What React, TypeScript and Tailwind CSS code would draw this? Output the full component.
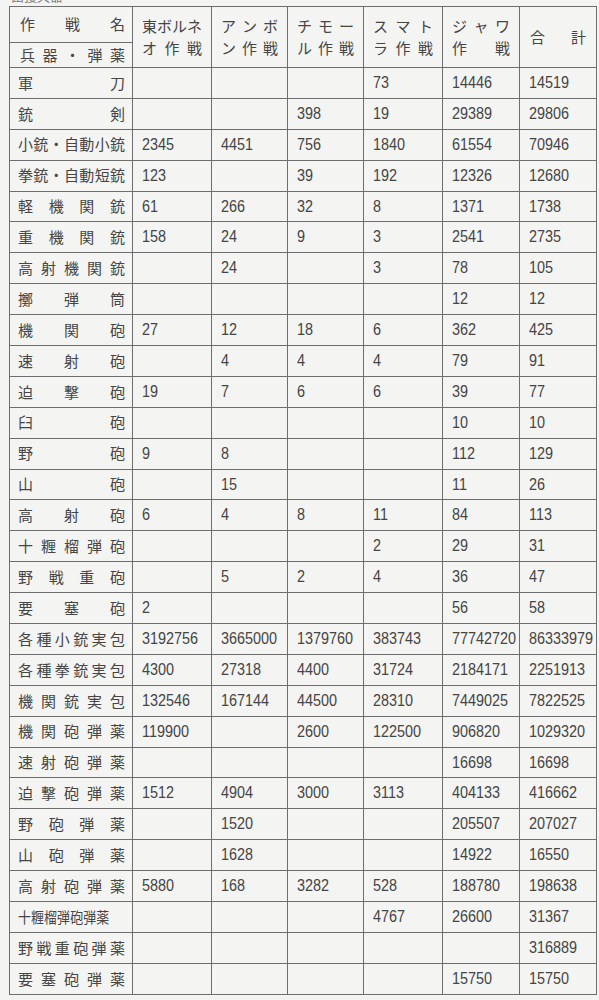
import React from 'react';

type Row = [string, string, string, string, string, string, string];

// 兵器・弾薬ごとの作戦別数量
const rows: Row[] = [
  ['軍刀', '', '', '', '73', '14446', '14519'],
  ['銃剣', '', '', '398', '19', '29389', '29806'],
  ['小銃・自動小銃', '2345', '4451', '756', '1840', '61554', '70946'],
  ['拳銃・自動短銃', '123', '', '39', '192', '12326', '12680'],
  ['軽機関銃', '61', '266', '32', '8', '1371', '1738'],
  ['重機関銃', '158', '24', '9', '3', '2541', '2735'],
  ['高射機関銃', '', '24', '', '3', '78', '105'],
  ['擲弾筒', '', '', '', '', '12', '12'],
  ['機関砲', '27', '12', '18', '6', '362', '425'],
  ['速射砲', '', '4', '4', '4', '79', '91'],
  ['迫撃砲', '19', '7', '6', '6', '39', '77'],
  ['臼砲', '', '', '', '', '10', '10'],
  ['野砲', '9', '8', '', '', '112', '129'],
  ['山砲', '', '15', '', '', '11', '26'],
  ['高射砲', '6', '4', '8', '11', '84', '113'],
  ['十糎榴弾砲', '', '', '', '2', '29', '31'],
  ['野戦重砲', '', '5', '2', '4', '36', '47'],
  ['要塞砲', '2', '', '', '', '56', '58'],
  ['各種小銃実包', '3192756', '3665000', '1379760', '383743', '77742720', '86333979'],
  ['各種拳銃実包', '4300', '27318', '4400', '31724', '2184171', '2251913'],
  ['機関銃実包', '132546', '167144', '44500', '28310', '7449025', '7822525'],
  ['機関砲弾薬', '119900', '', '2600', '122500', '906820', '1029320'],
  ['速射砲弾薬', '', '', '', '', '16698', '16698'],
  ['迫撃砲弾薬', '1512', '4904', '3000', '3113', '404133', '416662'],
  ['野砲弾薬', '', '1520', '', '', '205507', '207027'],
  ['山砲弾薬', '', '1628', '', '', '14922', '16550'],
  ['高射砲弾薬', '5880', '168', '3282', '528', '188780', '198638'],
  ['十糎榴弾砲弾薬', '', '', '', '4767', '26600', '31367'],
  ['野戦重砲弾薬', '', '', '', '', '', '316889'],
  ['要塞砲弾薬', '', '', '', '', '15750', '15750'],
];

const jp = "font-['Noto_Sans_CJK_JP','Noto_Sans',sans-serif]";
const num = "font-['Liberation_Sans',sans-serif]";
const cell = 'border-[1.5px] border-[#6e6e6e]';

function Spread({ text, className = '' }: { text: string; className?: string }) {
  return (
    <div className={`flex justify-between ${className}`}>
      {Array.from(text).map((ch, i) => (
        <span key={i}>{ch}</span>
      ))}
    </div>
  );
}

function HeadCell({ top, bottom }: { top: string; bottom: string }) {
  return (
    <th rowSpan={2} className={`${cell} px-[9px] align-middle font-normal`}>
      <Spread text={top} className="leading-[22px]" />
      <Spread text={bottom} className="leading-[22px]" />
    </th>
  );
}

export default function App() {
  return (
    <div className={`min-h-[1000px] w-[599px] overflow-hidden bg-[#f4f4f2] text-[#454545] ${jp}`}>
      <div className="h-[6px] overflow-hidden pl-[11px]">
        <div className="-mt-[12px] text-[13px] leading-[15px] text-[#7a7a7a]">鹵獲兵器</div>
      </div>
      <div className="pl-[9px]">
        <table className="w-[587px] table-fixed border-collapse text-[15px]">
          <colgroup>
            <col className="w-[123px]" />
            <col className="w-[79px]" />
            <col className="w-[76px]" />
            <col className="w-[76px]" />
            <col className="w-[79px]" />
            <col className="w-[77px]" />
            <col className="w-[77px]" />
          </colgroup>
          <thead>
            <tr className="h-[36px]">
              <th className={`${cell} pl-[10px] pr-[7px] font-normal`}>
                <Spread text="作戦名" />
              </th>
              <HeadCell top="東ボルネ" bottom="オ作戦" />
              <HeadCell top="アンボ" bottom="ン作戦" />
              <HeadCell top="チモー" bottom="ル作戦" />
              <HeadCell top="スマト" bottom="ラ作戦" />
              <HeadCell top="ジャワ" bottom="作戦" />
              <th rowSpan={2} className={`${cell} px-[10px] align-middle font-normal`}>
                <Spread text="合計" />
              </th>
            </tr>
            <tr className="h-[25px]">
              <th className={`${cell} pl-[10px] pr-[7px] font-normal`}>
                <Spread text="兵器・弾薬" />
              </th>
            </tr>
          </thead>
          <tbody>
            {rows.map((r) => (
              <tr key={r[0]} className="h-[30.9px]">
                <td className={`${cell} pl-[8px] pr-[7px]`}>
                  {r[0] === '十糎榴弾砲弾薬' ? (
                    <Spread text={r[0]} className="w-[106px] origin-left scale-x-[0.86]" />
                  ) : (
                    <Spread text={r[0]} />
                  )}
                </td>
                {r.slice(1).map((v, i) => (
                  <td key={i} className={`${cell} overflow-visible whitespace-nowrap pl-[9px] text-[16px] ${num}`}>
                    <span className="inline-block origin-left scale-x-[0.9]">{v}</span>
                  </td>
                ))}
              </tr>
            ))}
          </tbody>
        </table>
      </div>
    </div>
  );
}
